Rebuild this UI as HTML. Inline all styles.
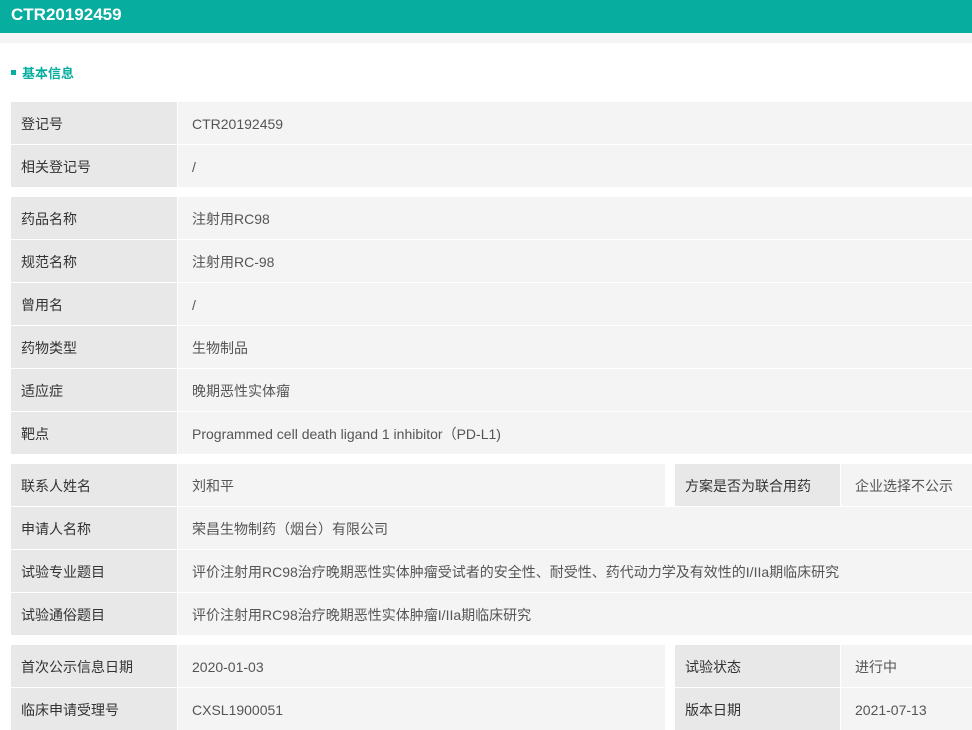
<!DOCTYPE html>
<html><head><meta charset="utf-8"><style>
*{margin:0;padding:0;box-sizing:border-box}
body{width:972px;height:730px;overflow:hidden;background:#fff;font-family:"Liberation Sans","Noto Sans CJK SC",sans-serif;position:relative}
.hd{position:absolute;left:0;top:0;width:972px;height:33px;background:#07ad9f;color:#fff;font-weight:bold;font-size:17px;line-height:30px;padding-left:11px}
.strip{position:absolute;left:0;top:33px;width:972px;height:10px;background:#f5f5f5}
.sec{position:absolute;left:11px;top:65px;font-size:13px;font-weight:bold;color:#07ad9f;line-height:18px}
.sec i{display:inline-block;width:5px;height:5px;background:#07ad9f;margin-right:6px;vertical-align:middle;position:relative;top:-2px}
.c{position:absolute;height:42px;line-height:44px;font-size:14px;padding-left:10px;white-space:nowrap;overflow:hidden}
.l{background:#e8e8e8;color:#333}
.v{background:#f4f4f4;color:#555;padding-left:14px}
</style></head><body>
<div class="hd">CTR20192459</div>
<div class="strip"></div>
<div class="sec"><i></i>基本信息</div>

<div class="c l" style="left:11px;top:102px;width:166px">登记号</div><div class="c v" style="left:178px;top:102px;width:794px">CTR20192459</div>
<div class="c l" style="left:11px;top:145px;width:166px">相关登记号</div><div class="c v" style="left:178px;top:145px;width:794px">/</div>

<div class="c l" style="left:11px;top:197px;width:166px">药品名称</div><div class="c v" style="left:178px;top:197px;width:794px">注射用RC98</div>
<div class="c l" style="left:11px;top:240px;width:166px">规范名称</div><div class="c v" style="left:178px;top:240px;width:794px">注射用RC-98</div>
<div class="c l" style="left:11px;top:283px;width:166px">曾用名</div><div class="c v" style="left:178px;top:283px;width:794px">/</div>
<div class="c l" style="left:11px;top:326px;width:166px">药物类型</div><div class="c v" style="left:178px;top:326px;width:794px">生物制品</div>
<div class="c l" style="left:11px;top:369px;width:166px">适应症</div><div class="c v" style="left:178px;top:369px;width:794px">晚期恶性实体瘤</div>
<div class="c l" style="left:11px;top:412px;width:166px">靶点</div><div class="c v" style="left:178px;top:412px;width:794px">Programmed cell death ligand 1 inhibitor（PD-L1)</div>

<div class="c l" style="left:11px;top:464px;width:166px">联系人姓名</div><div class="c v" style="left:178px;top:464px;width:487px">刘和平</div>
<div class="c l" style="left:675px;top:464px;width:165px">方案是否为联合用药</div><div class="c v" style="left:841px;top:464px;width:131px">企业选择不公示</div>
<div class="c l" style="left:11px;top:507px;width:166px">申请人名称</div><div class="c v" style="left:178px;top:507px;width:794px">荣昌生物制药（烟台）有限公司</div>
<div class="c l" style="left:11px;top:550px;width:166px">试验专业题目</div><div class="c v" style="left:178px;top:550px;width:794px">评价注射用RC98治疗晚期恶性实体肿瘤受试者的安全性、耐受性、药代动力学及有效性的I/IIa期临床研究</div>
<div class="c l" style="left:11px;top:593px;width:166px">试验通俗题目</div><div class="c v" style="left:178px;top:593px;width:794px">评价注射用RC98治疗晚期恶性实体肿瘤I/IIa期临床研究</div>

<div class="c l" style="left:11px;top:645px;width:166px">首次公示信息日期</div><div class="c v" style="left:178px;top:645px;width:487px">2020-01-03</div>
<div class="c l" style="left:675px;top:645px;width:165px">试验状态</div><div class="c v" style="left:841px;top:645px;width:131px">进行中</div>
<div class="c l" style="left:11px;top:688px;width:166px">临床申请受理号</div><div class="c v" style="left:178px;top:688px;width:487px">CXSL1900051</div>
<div class="c l" style="left:675px;top:688px;width:165px">版本日期</div><div class="c v" style="left:841px;top:688px;width:131px">2021-07-13</div>
</body></html>
